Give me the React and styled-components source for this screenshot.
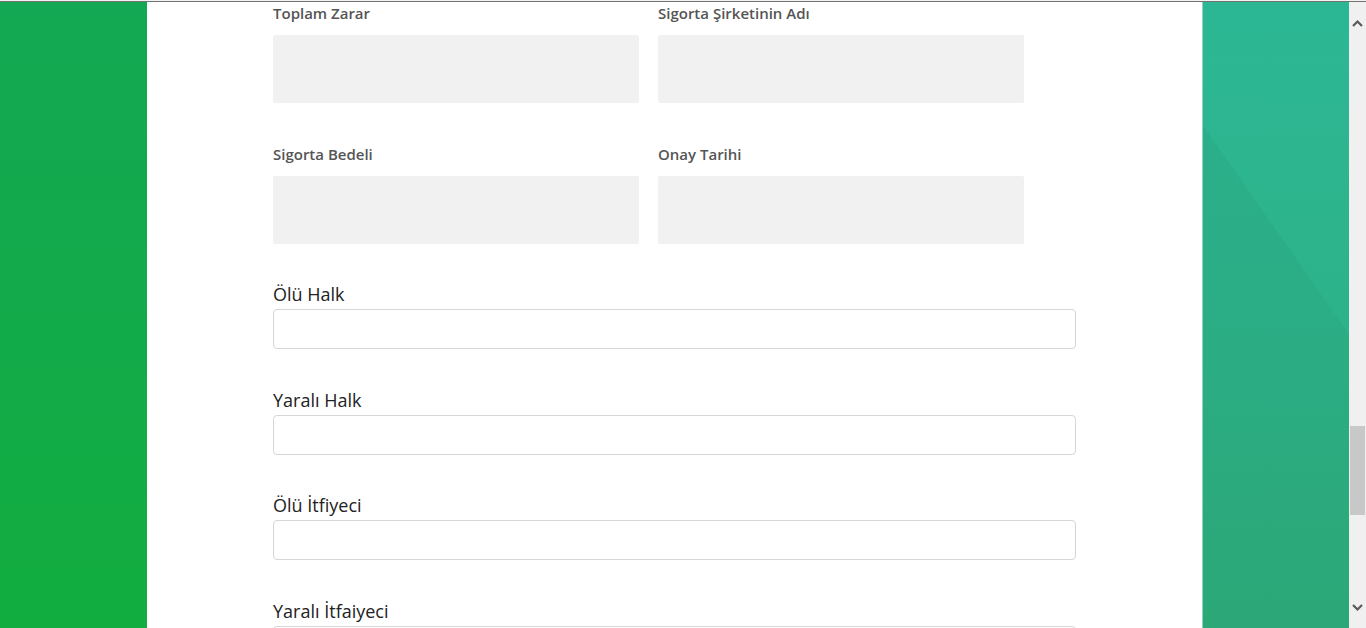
import React from "react";
import styled, { createGlobalStyle } from "styled-components";

const Global = createGlobalStyle`
  html, body { margin: 0; padding: 0; overflow: hidden; }
  body { font-family: "Open Sans", "Lato", sans-serif; background: #fff; }
`;

const Frame = styled.div`
  height: 628px;
  padding-top: 1px;
  box-sizing: border-box;
  background: #f4f4f4;
  display: flex;
  flex-direction: column;
`;

const Shell = styled.div`
  flex: 1;
  min-height: 0;
  border-top: 1px solid #727272;
  display: flex;
`;

const Page = styled.div`
  flex: 1;
  display: flex;
  min-width: 0;
`;

const SideLeft = styled.div`
  width: 147px;
  background: linear-gradient(180deg, #13a853 0%, #12ab48 60%, #12ad3f 100%);
`;

const SideRight = styled.div`
  width: 147px;
  border-left: 1px solid #8fd6be;
  box-sizing: border-box;
  background:
    linear-gradient(235deg, rgba(0,0,0,0) 190px, rgba(10,60,40,0.05) 191px),
    linear-gradient(180deg, #2cb794 0%, #2db38a 50%, #2eae7c 100%);
`;

const Content = styled.main`
  flex: 1;
  background: #fff;
  padding: 2px 126px 0 126px;
  display: flex;
  flex-direction: column;
  overflow: hidden;
`;

const Grid = styled.div`
  display: grid;
  grid-template-columns: 366px 366px;
  column-gap: 19px;
  row-gap: 42px;
  margin-bottom: 39px;
`;

const Cell = styled.div`
  display: flex;
  flex-direction: column;
`;

const SmallLabel = styled.div`
  font-size: 15px;
  font-weight: 600;
  color: #555;
  height: 18px;
  line-height: 18px;
  margin-bottom: 13px;
`;

const GrayBox = styled.div`
  height: 68px;
  background: #f1f1f1;
  border-radius: 2px;
`;

const Field = styled.div`
  display: flex;
  flex-direction: column;
  width: 803px;
  margin-bottom: 39.5px;
`;

const BigLabel = styled.label`
  font-size: 18px;
  font-weight: 500;
  color: #222;
  line-height: 22px;
  margin-bottom: 4px;
`;

const Input = styled.input`
  height: 40px;
  box-sizing: border-box;
  border: 1px solid #d6d6d6;
  border-radius: 4px;
  background: #fff;
  outline: none;
  padding: 0 12px;
  font-family: inherit;
  font-size: 15px;
`;

const Scrollbar = styled.div`
  width: 17px;
  flex-shrink: 0;
  background: #f0f0f0;
  position: relative;
  display: flex;
  flex-direction: column;
  justify-content: space-between;
  align-items: center;
`;

const Arrow = styled.div`
  height: 12px;
  width: 17px;
  margin: ${(p) => (p.$down ? "0 0 14px" : "15px 0 0")};
  display: flex;
  align-items: center;
  justify-content: center;
  color: #5a5a5a;
`;

const Thumb = styled.div`
  position: absolute;
  left: 1px;
  right: 1px;
  top: 424px;
  height: 89px;
  background: #c8c8c8;
`;

const pairs = [
  ["Toplam Zarar", "Sigorta Şirketinin Adı"],
  ["Sigorta Bedeli", "Onay Tarihi"],
];

const fields = ["Ölü Halk", "Yaralı Halk", "Ölü İtfiyeci", "Yaralı İtfaiyeci"];

export default function App() {
  return (
    <>
      <Global />
      <Frame>
        <Shell>
          <Page>
            <SideLeft />
            <Content>
              <Grid>
                {pairs.flat().map((l) => (
                  <Cell key={l}>
                    <SmallLabel>{l}</SmallLabel>
                    <GrayBox />
                  </Cell>
                ))}
              </Grid>
              {fields.map((f) => (
                <Field key={f}>
                  <BigLabel>{f}</BigLabel>
                  <Input />
                </Field>
              ))}
            </Content>
            <SideRight />
          </Page>
          <Scrollbar>
            <Arrow>
              <svg width="11" height="8" viewBox="0 0 11 8">
                <path d="M1 7 L5.5 2.5 L10 7" fill="none" stroke="currentColor" strokeWidth="2.2" />
              </svg>
            </Arrow>
            <Thumb />
            <Arrow $down>
              <svg width="11" height="8" viewBox="0 0 11 8">
                <path d="M1 1 L5.5 5.5 L10 1" fill="none" stroke="currentColor" strokeWidth="2.2" />
              </svg>
            </Arrow>
          </Scrollbar>
        </Shell>
      </Frame>
    </>
  );
}
